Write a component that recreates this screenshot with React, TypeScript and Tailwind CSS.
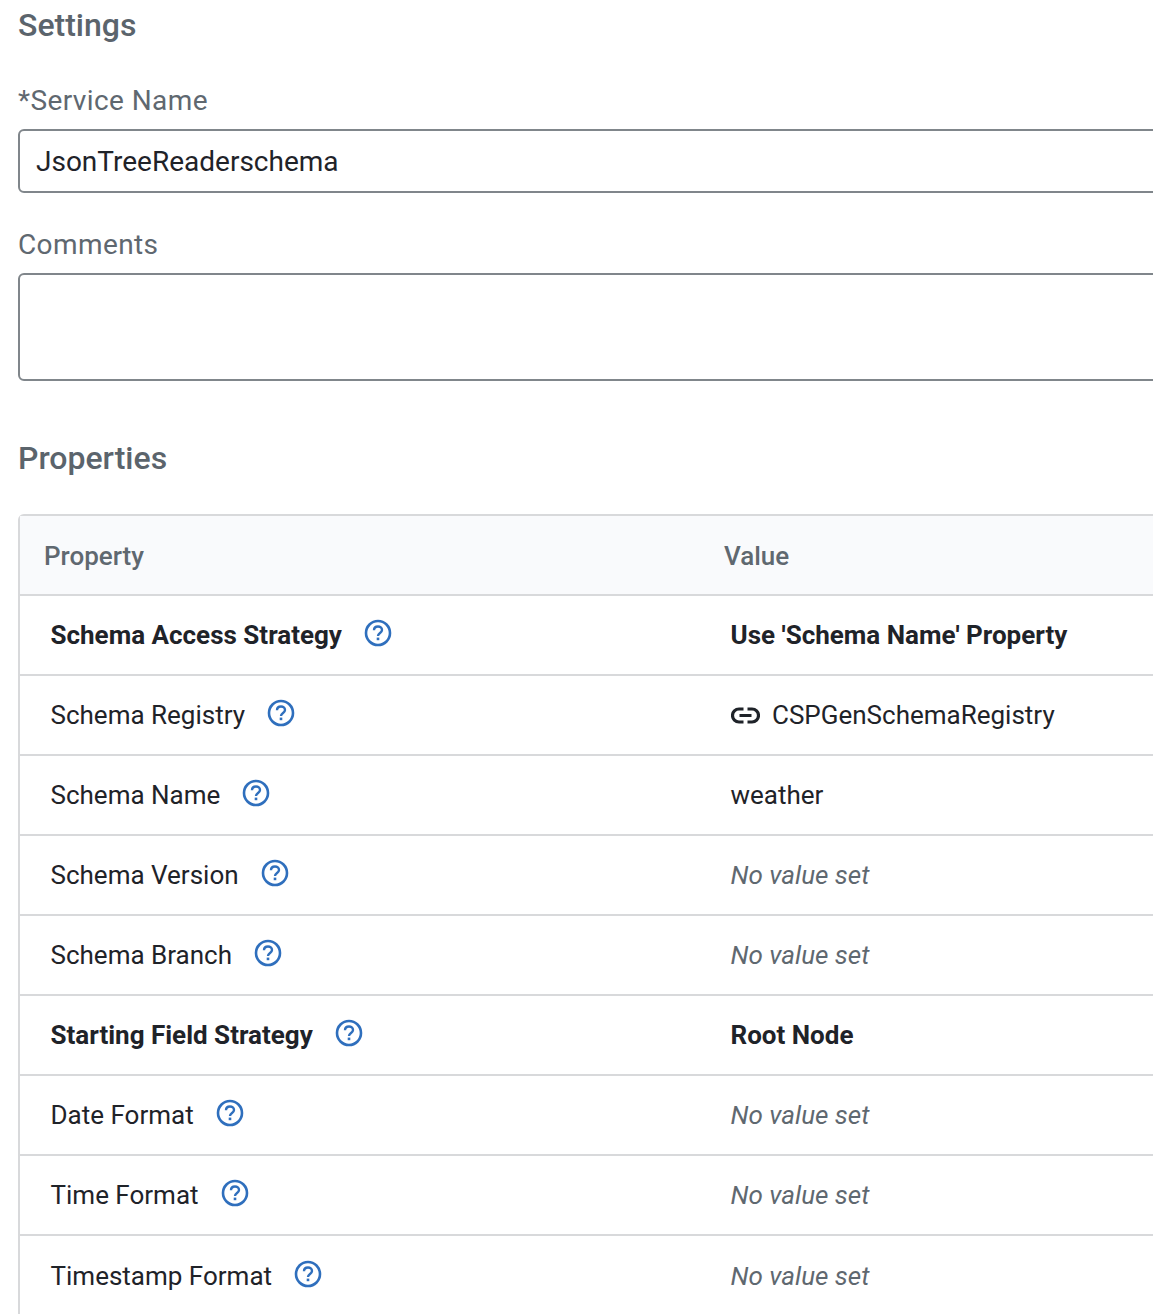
type Row = {
  name: string;
  value?: string;
  bold?: boolean;
  link?: boolean;
};

const rows: Row[] = [
  { name: "Schema Access Strategy", value: "Use 'Schema Name' Property", bold: true },
  { name: "Schema Registry", value: "CSPGenSchemaRegistry", link: true },
  { name: "Schema Name", value: "weather" },
  { name: "Schema Version" },
  { name: "Schema Branch" },
  { name: "Starting Field Strategy", value: "Root Node", bold: true },
  { name: "Date Format" },
  { name: "Time Format" },
  { name: "Timestamp Format" },
];

function HelpIcon() {
  return (
    <svg width="28" height="28" viewBox="0 0 28 28" fill="none" className="shrink-0 -mt-[5px] text-[#2f6fbd]">
      <circle cx="14" cy="14" r="12" stroke="currentColor" strokeWidth="2.6" />
      <path
        d="M10 11.2c0-2.3 1.8-3.7 4-3.7s4 1.4 4 3.5c0 2.9-4 3-4 6"
        stroke="currentColor"
        strokeWidth="2.4"
        strokeLinecap="butt"
      />
      <rect x="12.7" y="18.6" width="2.6" height="2.6" fill="currentColor" />
    </svg>
  );
}

// material style "link" glyph, wider than lucide's
function LinkIcon() {
  return (
    <svg width="29" height="17" viewBox="0 0 29 17" fill="none" className="shrink-0 text-[#1f2329]">
      <path
        d="M12.5 2H8a6.5 6.5 0 0 0 0 13h4.5M16.5 2H21a6.5 6.5 0 0 1 0 13h-4.5M8.5 8.5h12"
        stroke="currentColor"
        strokeWidth="3.2"
      />
    </svg>
  );
}

function PropertyRow({ row, last }: { row: Row; last: boolean }) {
  return (
    <div className={`flex h-20 items-center border-t-2 border-[#d8d9db] text-[26px] text-[#1f2329] ${last ? "pt-[2px]" : ""}`}>
      <div className={`flex w-[711px] shrink-0 items-center gap-[22px] pl-[30.5px] ${row.bold ? "font-bold" : ""}`}>
        <span>{row.name}</span>
        <HelpIcon />
      </div>
      {row.value ? (
        <div className={`-ml-[0.5px] flex items-center gap-[12.5px] ${row.bold ? "font-bold" : ""}`}>
          {row.link && <LinkIcon />}
          <span>{row.value}</span>
        </div>
      ) : (
        <div className="-ml-[0.5px] italic text-[#5f6870]">No value set</div>
      )}
    </div>
  );
}

export default function App() {
  return (
    <div className="h-[1314px] w-full overflow-hidden bg-white pl-[18px] font-['Roboto',sans-serif]">
      <h2 className="pt-[5px] text-[32px] leading-[40px] font-medium text-[#5b646c]">Settings</h2>

      <label className="mt-[38px] block text-[28px] leading-[36px] tracking-[0.4px] text-[#5f6870]">*Service Name</label>
      <div className="mt-[10px] flex h-[64px] w-[1300px] items-center rounded-[6px] border-2 border-[#80868b] pt-[2px] pl-[16px] text-[28px] text-[#1f2329]">
        JsonTreeReaderschema
      </div>

      <label className="mt-[34px] block text-[28px] leading-[36px] tracking-[0.4px] text-[#5f6870]">Comments</label>
      <div className="mt-[10px] h-[108px] w-[1300px] rounded-[6px] border-2 border-[#80868b]" />

      <h2 className="mt-[56px] text-[32px] leading-[42px] font-medium text-[#5b646c]">Properties</h2>

      <div className="mt-[35px] w-[1300px] rounded-t-[6px] border-2 border-[#d8d9db]">
        <div className="flex h-[78px] items-center bg-[#f9fafc] pt-[2px] text-[26px] font-medium text-[#5f6870]">
          <div className="w-[704px] shrink-0 pl-[24px]">Property</div>
          <div>Value</div>
        </div>
        {rows.map((row, i) => (
          <PropertyRow key={row.name} row={row} last={i === rows.length - 1} />
        ))}
      </div>
    </div>
  );
}
